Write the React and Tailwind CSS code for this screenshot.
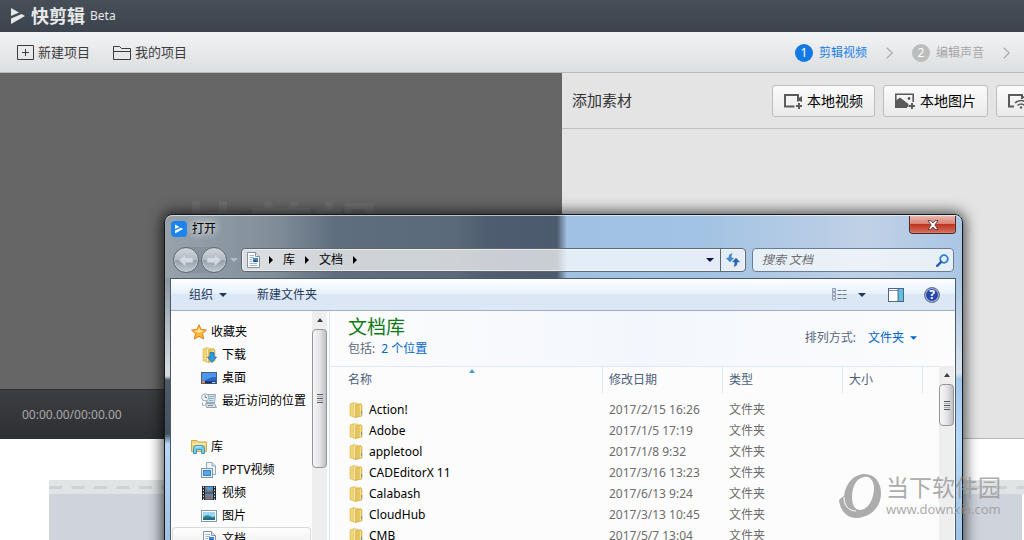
import React from "react";

const files = [
  ["Action!", "2017/2/15 16:26"],
  ["Adobe", "2017/1/5 17:19"],
  ["appletool", "2017/1/8 9:32"],
  ["CADEditorX 11", "2017/3/16 13:23"],
  ["Calabash", "2017/6/13 9:24"],
  ["CloudHub", "2017/3/13 10:45"],
  ["CMB", "2017/5/7 13:04"],
];

function PlayMark({ className }) {
  return (
    <svg viewBox="0 0 14 16" className={className} fill="currentColor" aria-hidden="true">
      <path d="M0 0L8 4.600L0 8Z" />
      <path d="M0 10.600L10.600 6L14 8L0 16Z" />
    </svg>
  );
}

function Caret({ className }) {
  return (
    <svg viewBox="0 0 8 4" className={className} fill="currentColor" aria-hidden="true">
      <path d="M0 0H8L4 4Z" />
    </svg>
  );
}

function Crumb() {
  return (
    <svg viewBox="0 0 4 8" className="h-2 w-1 shrink-0" fill="#000" aria-hidden="true">
      <path d="M0 0L4 4L0 8Z" />
    </svg>
  );
}

function DocIcon() {
  return (
    <svg viewBox="0 0 16 16" className="size-4 shrink-0" aria-hidden="true">
      <path d="M2.5 .5H10.5L14.5 4.5V15.5H2.5Z" fill="#fbfcfd" stroke="#8593a0" />
      <path d="M10.5 .5V4.5H14.5" fill="#dfe6ec" stroke="#8593a0" />
      <path d="M4.5 3.5H9M4.5 5.5H9M4.5 7.5H7M4.5 9.5H7M4.5 11.5H12M4.5 13.5H12" stroke="#9db2cb" />
      <rect x="8" y="6" width="5" height="4" fill="#3b86d6" />
      <path d="M8 10L10 8L13 10Z" fill="#1d4a6e" />
    </svg>
  );
}

function FolderIcon({ down }) {
  return (
    <svg viewBox="0 0 16 16" className="size-4 shrink-0" aria-hidden="true">
      <path d="M2 2L6 .6L8 1.400V15.4L2 13.8Z" fill="#f0d673" stroke="#cda745" strokeWidth=".5" />
      <path d="M5.600 1.6L9.4 .8V14L5.600 15.4Z" fill="#fbf0b4" stroke="#d4b24e" strokeWidth=".5" />
      <path d="M7.6 2.600L12.6 1.600L14 3V14L7.6 15.4Z" fill="#e6c55c" stroke="#c49b33" strokeWidth=".5" />
      <path d="M12.4 3V13.8" stroke="#f8e596" />
      {down ? (
        <path d="M9 5.5H13V10H15.6L11 15.6L6.4 10H9Z" fill="#2f9be8" stroke="#1566ad" strokeWidth=".7" />
      ) : (
        <path d="M13.6 9V12" stroke="#5a9bb5" />
      )}
    </svg>
  );
}

function StarIcon() {
  return (
    <svg viewBox="0 0 16 16" className="size-4 shrink-0" aria-hidden="true">
      <path d="M8 .8L10.1 5.5L15.4 6.1L11.5 9.6L12.7 15L8 12.3L3.3 15L4.5 9.6L.6 6.1L5.9 5.5Z" fill="#fdb93a" stroke="#e07a1c" strokeLinejoin="round" />
      <path d="M8 3L9.3 6.3L13 6.9L8 8.8L3 6.9L6.7 6.3Z" fill="#ffe58e" />
    </svg>
  );
}

function DesktopIcon() {
  return (
    <svg viewBox="0 0 16 16" className="size-4 shrink-0" aria-hidden="true">
      <rect x=".5" y="2.5" width="15" height="11" fill="#2765c8" stroke="#4a5f85" />
      <path d="M1 3H15V7C10 7 6 9 1 12Z" fill="#4f95ea" />
      <rect x="1" y="11.4" width="14" height="2" fill="#1c2d52" />
      <rect x="1" y="11" width="3" height="2.4" fill="#e8833a" />
      <rect x="11" y="12" width="3.4" height="1" fill="#c6d6ee" />
    </svg>
  );
}

function RecentIcon() {
  return (
    <svg viewBox="0 0 16 16" className="size-4 shrink-0" aria-hidden="true">
      <path d="M6.500 1.500H14.500L13.500 9.500H5.500Z" fill="#d3e4ef" stroke="#96a4af" />
      <path d="M8.500 3.500H13M8 5.5H12.500M8 7.500H12" stroke="#8ab0c8" />
      <path d="M4.500 10.500H13.500L15.500 14.500H5.500Z" fill="#dbe0e4" stroke="#98a2aa" />
      <path d="M7 12.5H12" stroke="#7d8f9e" />
      <circle cx="4.2" cy="4.4" r="3.6" fill="#f3f6f8" stroke="#a0a9b0" />
      <path d="M4.2 2.4V4.6H6" stroke="#6d7a85" fill="none" />
      <path d="M1.5 9.5V12.5H3.5" stroke="#9ba5ad" fill="none" />
    </svg>
  );
}

function LibraryIcon() {
  return (
    <svg viewBox="0 0 16 16" className="size-4 shrink-0" aria-hidden="true">
      <path d="M.5 1.500H6L7.5 3H15.5V12.5H.5Z" fill="#f4d777" stroke="#d0aa4c" />
      <path d="M1 5H15" stroke="#fff3bd" />
      <path d="M2.500 14.500V9.500Q2.500 6.500 5.500 6.500H10.500Q13.500 6.500 13.500 9.500V14.500H10.500V11Q10.500 10.500 10 10.500H6Q5.500 10.500 5.500 11V14.500Z" fill="#74c8ec" stroke="#3a94c4" />
      <path d="M4 9Q4.500 7.800 6 7.800H10" stroke="#d2f0fb" fill="none" />
    </svg>
  );
}

function PptvIcon() {
  return (
    <svg viewBox="0 0 16 16" className="size-4 shrink-0" aria-hidden="true">
      <path d="M5.500 .5H11L14.500 4V12.500H5.500Z" fill="#eef4f9" stroke="#93a7ba" />
      <path d="M11 .5V4H14.500" fill="none" stroke="#93a7ba" />
      <rect x=".5" y="6.500" width="11" height="9" fill="#e8f1f8" stroke="#7d96ad" />
      <rect x="2.500" y="8.500" width="7" height="5" fill="#58a6e4" stroke="#3b83c0" />
    </svg>
  );
}

function VideoIcon() {
  return (
    <svg viewBox="0 0 16 16" className="size-4 shrink-0" aria-hidden="true">
      <rect x="1" y="1" width="14" height="14" fill="#20262c" />
      <path d="M2.500 1.500V15M13.500 1.500V15" stroke="#d5dde3" strokeDasharray="1.500 1.500" />
      <rect x="4" y="1.500" width="8" height="6" fill="#4ba2d8" />
      <rect x="4" y="8.500" width="8" height="6" fill="#4ba2d8" />
      <path d="M4 2L8 6L12 3V7.500H4ZM4 9L7 10L10 8.500L12 14.500H4Z" fill="#a3503c" opacity=".6" />
    </svg>
  );
}

function PictureIcon() {
  return (
    <svg viewBox="0 0 16 16" className="size-4 shrink-0" aria-hidden="true">
      <rect x=".5" y="2.500" width="15" height="11" fill="#fbfcfd" stroke="#8797a5" />
      <rect x="2" y="4" width="12" height="8" fill="#9bd6f5" />
      <path d="M2 9Q6 6 9 8T14 8V12H2Z" fill="#2f8f7c" />
      <path d="M2 10.500Q7 9 14 10.500V12H2Z" fill="#2467a0" />
    </svg>
  );
}

function SideItem({ icon, label, root, selected }) {
  return (
    <li>
      <button
        type="button"
        className={
          "flex h-[23px] w-full items-center whitespace-nowrap text-left " +
          (root ? "gap-1 pl-[19px] " : "gap-[5px] pl-[29px] ") +
          (selected ? "rounded-sm bg-gradient-to-b from-white to-[#ececec] ring-1 ring-inset ring-[#d9d9d9]" : "")
        }
      >
        {icon}
        {label}
      </button>
    </li>
  );
}

function Thumb({ className }) {
  return (
    <div className={"flex w-[15px] items-center justify-center rounded-sm border border-[#94969b] bg-gradient-to-r from-[#f6f6f6] via-[#e6e6e8] to-[#bfc0c4] " + className}>
      <div className="flex w-1.5 flex-col gap-px">
        <div className="h-px bg-[#55585c]" />
        <div className="h-px bg-[#a9abb0]" />
        <div className="h-px bg-[#55585c]" />
        <div className="h-px bg-[#a9abb0]" />
        <div className="h-px bg-[#55585c]" />
      </div>
    </div>
  );
}

function UpArrow() {
  return (
    <svg viewBox="0 0 6 4" className="mx-auto h-1 w-1.5" fill="#3a3d42" aria-hidden="true">
      <path d="M0 4L3 0L6 4Z" />
    </svg>
  );
}

function VideoAddIcon() {
  return (
    <svg viewBox="0 0 18 16" className="h-4 w-[18px]" fill="none" stroke="#5a5a5a" aria-hidden="true">
      <path d="M10.500 13.500H1V2H14V8.500" strokeWidth="2" />
      <path d="M14 5.500L18 3V9L14 7.500Z" fill="#5a5a5a" stroke="none" />
      <path d="M15 10V16M12 13H18" strokeWidth="2" />
    </svg>
  );
}

function ImageAddIcon() {
  return (
    <svg viewBox="0 0 20 16" className="h-4 w-5" fill="none" stroke="#5a5a5a" aria-hidden="true">
      <path d="M12 14.200H.8V1.300H18.200V9" strokeWidth="1.600" />
      <path d="M1 14V7.500L5 4.500L13.500 11V14Z" fill="#5a5a5a" stroke="none" />
      <circle cx="14" cy="5.500" r="1.400" fill="#5a5a5a" stroke="none" />
      <path d="M17 10V16M14 13H20" strokeWidth="2" />
    </svg>
  );
}

function WebVideoIcon() {
  return (
    <svg viewBox="0 0 20 16" className="h-4 w-5 shrink-0" fill="none" stroke="#5a5a5a" aria-hidden="true">
      <path d="M6 13.500H1V2H14V6" strokeWidth="2" />
      <path d="M14 4L18 2V7Z" fill="#5a5a5a" stroke="none" />
      <path d="M7 10Q13 5 19 10M9.500 12.500Q13 9.500 16.500 12.500" strokeWidth="1.500" />
      <circle cx="13" cy="14.500" r="1.200" fill="#5a5a5a" stroke="none" />
    </svg>
  );
}

function Step({ n, label, active }) {
  return (
    <a href="#" className={"flex items-center gap-1.5 " + (active ? "text-[#1a7fe6]" : "text-[#a6a6a6]")}>
      <span className={"flex size-[18px] items-center justify-center rounded-full text-xs text-white " + (active ? "bg-[#1579e4]" : "bg-[#bdbdbd]")}>{n}</span>
      {label}
    </a>
  );
}

function StepArrow() {
  return (
    <svg viewBox="0 0 7 12" className="h-3 w-[7px] shrink-0" fill="none" stroke="#a9a9a9" strokeWidth="1.200" aria-hidden="true">
      <path d="M.8 .8L6.200 6L.8 11.200" />
    </svg>
  );
}

const assetButton =
  "flex h-8 shrink-0 items-center whitespace-nowrap rounded-[3px] border border-[#bdbdbd] bg-gradient-to-b from-[#fbfbfb] to-[#eaeaea] text-sm text-black";

function Editor() {
  return (
    <div className="flex h-full flex-col bg-white">
      <header className="flex h-8 shrink-0 items-center bg-gradient-to-b from-[#464e58] to-[#3c444e] pl-[11px] text-[#e8e8e8]">
        <PlayMark className="h-4 w-3.5" />
        <h1 className="ml-1.5 text-lg font-bold leading-none">快剪辑</h1>
        <span className="ml-[5px] text-xs">Beta</span>
      </header>

      <nav className="flex h-[41px] shrink-0 items-center border-b border-[#b9babc] bg-gradient-to-b from-[#f3f4f6] to-[#dddee0] pt-px pl-[17px] text-[13px] text-[#3c3c3c]">
        <button type="button" className="flex items-center gap-1">
          <svg viewBox="0 0 17 15" className="h-[15px] w-[17px]" fill="none" stroke="#3c3c3c" aria-hidden="true">
            <path d="M.5 .5H16.500V14.500H.5ZM8.500 4V11M5 7.500H12" />
          </svg>
          新建项目
        </button>
        <button type="button" className="ml-[23px] flex items-center gap-1">
          <svg viewBox="0 0 18 14" className="h-3.5 w-[18px]" fill="none" stroke="#3c3c3c" aria-hidden="true">
            <path d="M.5 13.500V.5H6.500L8.500 2.500H17.500V13.500ZM.5 5.500H17.500" />
          </svg>
          我的项目
        </button>
        <div className="ml-auto flex shrink-0 items-center pr-3.5 text-xs">
          <Step n="1" label="剪辑视频" active />
          <div className="mx-[19px]"><StepArrow /></div>
          <Step n="2" label="编辑声音" />
          <div className="ml-[19px]"><StepArrow /></div>
        </div>
      </nav>

      <div className="flex h-[366px] shrink-0">
        <section className="flex w-[562px] shrink-0 flex-col bg-[#666]">
          <div className="flex flex-1 items-center justify-center pt-0.5">
            <span className="text-[66px] font-bold leading-none text-[#6f6f6f]">快剪辑</span>
          </div>
          <div className="flex h-[50px] items-center border-t border-[#2c2d2f] bg-gradient-to-b from-[#3d3e41] to-[#2e2f33] pl-[22px] text-xs text-[#a8a8a8]">
            00:00.00/00:00.00
          </div>
        </section>
        <section className="min-w-0 flex-1 overflow-hidden border-b border-[#b5b5b5] bg-[#e4e4e4]">
          <div className="flex h-14 items-center border-b border-[#c0c0c0] pl-2.5">
            <h2 className="shrink-0 text-[15px] whitespace-nowrap text-[#333]">添加素材</h2>
            <div className="ml-[140px] flex shrink-0 gap-2">
              <button type="button" className={assetButton + " gap-[5px] px-[11px]"}>
                <VideoAddIcon />本地视频
              </button>
              <button type="button" className={assetButton + " gap-[5px] px-[11px]"}>
                <ImageAddIcon />本地图片
              </button>
              <button type="button" className={assetButton + " px-[11px]"} aria-label="网络视频">
                <WebVideoIcon />
              </button>
            </div>
          </div>
        </section>
      </div>

      <div className="mt-[41px] ml-[49px] flex flex-1 flex-col">
        <div className="flex h-3.5 items-center bg-[#e0e4e5]">
          <svg className="h-[3px] w-full" aria-hidden="true">
            <path d="M0 1.500H1000" stroke="#ccd2d6" strokeWidth="3" strokeDasharray="13 9.500" />
          </svg>
        </div>
        <div className="mr-0.5 flex-1 bg-[#ced3dc]" />
      </div>
    </div>
  );
}

function TitleBar() {
  return (
    <div className="flex h-7 items-start pl-1.5">
      <div className="mt-[5px] flex items-center gap-[5px]">
        <div className="flex size-4 items-center justify-center rounded-sm bg-[#1b83ee] text-white">
          <PlayMark className="h-2.5 w-2" />
        </div>
        <h2 className="text-xs leading-4 text-black [text-shadow:0_0_8px_#fff,0_0_8px_#fff]">打开</h2>
      </div>
      <button
        type="button"
        aria-label="关闭"
        className="mr-1.5 ml-auto flex h-[18px] w-[47px] items-center justify-center rounded-b border border-t-0 border-[#4e2527] bg-[linear-gradient(to_bottom,#eab4aa_0,#d98474_45%,#bf3420_50%,#d4705c_100%)] shadow-[inset_0_0_1px_#fff]"
      >
        <svg viewBox="0 0 12 10" className="h-2.5 w-3" aria-hidden="true">
          <path d="M1 .7H4L6 3L8 .7H11L7.800 5L11 9.300H8L6 7L4 9.300H1L4.200 5Z" fill="#fff" stroke="#4f3a3e" strokeWidth=".9" />
        </svg>
      </button>
    </div>
  );
}

function NavCircle({ flip }) {
  return (
    <button
      type="button"
      aria-label={flip ? "前进" : "后退"}
      className="flex size-[26px] items-center justify-center rounded-full border border-[#5f6a75] bg-[linear-gradient(to_bottom,#d0d6db_0,#b3bcc4_48%,#939fa9_52%,#c3ccd3_100%)] shadow-[inset_0_0_0_1px_#c9d0d6]"
    >
      <svg viewBox="0 0 16 14" className={"h-3.5 w-4 " + (flip ? "rotate-180" : "")} aria-hidden="true">
        <path d="M1 7L7.500 1V4.500H15V9.500H7.500V13Z" fill="#d3d9de" stroke="#b9c2c9" />
      </svg>
    </button>
  );
}

function AddressRow() {
  return (
    <div className="flex h-[34px] items-center pr-2 pb-0.5 pl-2">
      <div className="flex items-center gap-0.5 rounded-full bg-[#87929d]">
        <NavCircle />
        <NavCircle flip />
      </div>
      <Caret className="ml-[3px] h-1 w-2 text-[#b5bec6]" />
      <div className="ml-[3px] flex h-6 flex-1 items-center rounded-sm border border-[#5d6873] bg-white/70 pl-[3px] text-xs text-black ring-1 ring-inset ring-white/50">
        <DocIcon />
        <div className="ml-2 flex items-center gap-[10px]">
          <Crumb />
          <span>库</span>
          <Crumb />
          <span>文档</span>
          <Crumb />
        </div>
        <button type="button" aria-label="展开" className="mr-1 ml-auto px-0.5">
          <Caret className="h-1 w-2 text-[#101050]" />
        </button>
        <button type="button" aria-label="刷新" className="flex h-full w-[25px] items-center justify-center border-l border-[#5d6873]">
          <svg viewBox="0 0 14 14" className="size-3.5" aria-hidden="true">
            <path d="M6 .5Q2.500 1 2.800 5H.3L4 9L7.600 5H5.200Q5 3 6 .5Z" fill="#3a8fd8" stroke="#2a6cab" strokeWidth=".4" />
            <path d="M8 13.500Q11.500 13 11.200 9H13.700L10 5L6.400 9H8.800Q9 11 8 13.500Z" fill="#2a62b4" stroke="#2a6cab" strokeWidth=".4" />
          </svg>
        </button>
      </div>
      <label className="ml-[6px] flex h-6 w-[202px] items-center rounded-sm border border-[#6b7c90] bg-white/70 pr-1 pl-[9px]">
        <input
          type="search"
          aria-label="搜索 文档"
          placeholder="搜索 文档"
          className="min-w-0 flex-1 bg-transparent text-xs italic outline-none placeholder:text-[#6d6d6d]"
        />
        <svg viewBox="0 0 13 13" className="size-[13px]" fill="none" aria-hidden="true">
          <circle cx="8" cy="5" r="3.800" stroke="#2a7fd0" strokeWidth="1.800" />
          <path d="M5.200 7.800L1.200 11.800" stroke="#2b5fae" strokeWidth="2.400" strokeLinecap="round" />
        </svg>
      </label>
    </div>
  );
}

function CommandBar() {
  return (
    <div className="flex h-8 shrink-0 items-center border-b border-[#a0afc3] bg-[linear-gradient(to_bottom,#fcfeff_0,#e8f2fb_46%,#dce7f5_50%,#dce7f5_100%)] pr-[15px] pl-[18px] text-xs text-[#1e395b]">
      <button type="button" className="flex items-center gap-1.5">
        组织
        <Caret className="h-1 w-2" />
      </button>
      <button type="button" className="ml-[30px]">新建文件夹</button>
      <button type="button" aria-label="更改视图" className="ml-auto flex items-center gap-[11px]">
        <svg viewBox="0 0 15 13" className="h-[13px] w-[15px]" fill="none" aria-hidden="true">
          <path d="M.5 .5H3.500V3.500H.5ZM.5 4.500H3.500V7.500H.5ZM.5 8.500H3.500V12H.5Z" stroke="#8c9bb0" fill="#fff" />
          <path d="M1.500 2H2.500M1.500 10.500H2.500" stroke="#3b7fc4" />
          <path d="M1.500 6H2.500" stroke="#d0543a" />
          <path d="M5.500 2.500H9.500M10.500 2.500H14.500M5.500 6.500H9.500M10.500 6.500H14.500M5.500 10.500H9.500M10.500 10.500H14.500" stroke="#66788f" />
        </svg>
        <Caret className="h-1 w-2" />
      </button>
      <button type="button" aria-label="预览窗格" className="ml-[22px]">
        <svg viewBox="0 0 16 14" className="h-3.5 w-4" aria-hidden="true">
          <rect x=".5" y=".5" width="15" height="13" fill="#fff" stroke="#4c6684" />
          <path d="M1 2.500H10" stroke="#7d93ad" />
          <rect x="10" y="1" width="5" height="12" fill="#62bede" />
          <path d="M10 1V13" stroke="#4c6684" />
        </svg>
      </button>
      <button type="button" aria-label="帮助" className="ml-5 flex size-4 items-center justify-center rounded-full border border-[#707c90] bg-[#2848b0] text-xs font-bold leading-none text-white shadow-[inset_0_0_0_1px_#b5c0da]">
        ?
      </button>
    </div>
  );
}

function Sidebar() {
  return (
    <div className="flex w-[159px] shrink-0 overflow-hidden border-r border-[#dbe6f4]">
      <div className="min-w-0 flex-1 overflow-hidden pt-[9px] pr-px pl-px">
        <ul>
          <SideItem root icon={<StarIcon />} label="收藏夹" />
          <SideItem icon={<FolderIcon down />} label="下载" />
          <SideItem icon={<DesktopIcon />} label="桌面" />
          <SideItem icon={<RecentIcon />} label="最近访问的位置" />
        </ul>
        <ul className="mt-[23px]">
          <SideItem root icon={<LibraryIcon />} label="库" />
          <SideItem icon={<PptvIcon />} label="PPTV视频" />
          <SideItem icon={<VideoIcon />} label="视频" />
          <SideItem icon={<PictureIcon />} label="图片" />
          <SideItem icon={<DocIcon />} label="文档" selected />
        </ul>
      </div>
      <div className="mr-0.5 flex w-[15px] flex-col bg-[#eeeeef]">
        <div className="flex h-[18px] shrink-0 items-center"><UpArrow /></div>
        <Thumb className="h-[139px]" />
      </div>
    </div>
  );
}

function FileList() {
  const head = "h-[26px] border-r border-[#d9e5f3] pl-1.5 text-left align-middle font-normal";
  return (
    <div className="flex min-w-0 flex-1 flex-col bg-[#fcfcfc]">
      <div className="flex h-[55px] shrink-0 items-start bg-gradient-to-r from-[#fcfcfc] via-[#f3f7fd] to-[#fcfcfc] pr-[38px] pl-[18px]">
        <div>
          <h3 className="mt-1 text-[19px] leading-6 text-[#0f7a14]">文档库</h3>
          <p className="text-xs leading-5 text-[#5a677b]">
            包括: <a href="#" className="ml-[3px] text-[#0066cc]">2 个位置</a>
          </p>
        </div>
        <div className="mt-[17px] ml-auto flex items-center text-xs leading-5 text-[#5a677b]">
          排列方式:
          <button type="button" className="ml-3 flex items-center gap-1.5 text-[#0066cc]">
            文件夹
            <Caret className="h-1 w-[7px]" />
          </button>
        </div>
      </div>
      <div className="flex min-h-0 flex-1">
        <div className="relative min-w-0 flex-1 overflow-hidden border-t border-[#dce8f5] pl-3">
          <svg viewBox="0 0 6 4" className="absolute top-0.5 left-[139px] h-1 w-1.5" fill="#4a9cc9" aria-hidden="true">
            <path d="M0 4L3 0L6 4Z" />
          </svg>
          <table className="w-full table-fixed border-separate border-spacing-0 text-xs leading-5 text-[#6d6d6d]">
            <colgroup>
              <col className="w-[261px]" />
              <col className="w-[120px]" />
              <col className="w-[120px]" />
              <col className="w-20" />
              <col />
            </colgroup>
            <thead className="text-[#4c607a]">
              <tr>
                <th className={head}>名称</th>
                <th className={head}>修改日期</th>
                <th className={head}>类型</th>
                <th className={head}>大小</th>
                <th aria-hidden="true" />
              </tr>
              <tr><td colSpan={5} className="h-1.5 p-0" /></tr>
            </thead>
            <tbody>
              {files.map(([name, date]) => (
                <tr key={name}>
                  <td className="h-[21px] p-0 pl-1.5 align-middle text-black">
                    <span className="flex items-center gap-[5px] leading-5"><FolderIcon />{name}</span>
                  </td>
                  <td className="p-0 pl-1.5">{date}</td>
                  <td className="p-0 pl-1.5">文件夹</td>
                  <td />
                  <td />
                </tr>
              ))}
            </tbody>
          </table>
        </div>
        <div className="mr-px flex w-[15px] shrink-0 flex-col bg-[#eeeeef]">
          <div className="flex h-[18px] shrink-0 items-center"><UpArrow /></div>
          <Thumb className="h-[42px]" />
        </div>
      </div>
    </div>
  );
}

function OpenDialog() {
  return (
    <div
      role="dialog"
      aria-label="打开"
      className="absolute top-[214px] -bottom-4 left-[164px] flex w-[799px] flex-col overflow-hidden rounded-t-lg border border-[#16191c] bg-[linear-gradient(90deg,#98a2ab_0,#818e9a_110px,#5f6e7e_170px,#5b6a7a_290px,#4e5e70_320px,#4b5b6d_392px,#a1c1e2_402px,#a3c3e4_540px,#c0d1e6_700px,#a9c6e4_799px)] shadow-[0_0_14px_2px_rgba(0,0,0,0.7)]"
    >
      <div className="flex min-h-0 flex-1 flex-col rounded-t-[7px] border-t border-white/60">
        <TitleBar />
        <AddressRow />
        <div className="flex min-h-0 flex-1">
          <div className="w-[5px] shrink-0 bg-[linear-gradient(to_bottom,#8d98a3_0,#d5dade_90px,#d5dade_98px,#4d5966_102px,#46525f_156px,#b7d7f8_166px,#9dbde0_100%)]" />
          <div className="flex min-w-0 flex-1 flex-col border-x border-t border-[#4b5a6b] bg-[#fcfcfc]">
            <CommandBar />
            <div className="flex min-h-0 flex-1 text-xs text-black">
              <Sidebar />
              <FileList />
            </div>
          </div>
          <div className="w-[6px] shrink-0 bg-[linear-gradient(to_bottom,#a9c6e4_0,#dbe4ee_95px,#a3c6ec_101px,#b7dafb_160px,#9dc0e6_100%)]" />
        </div>
      </div>
    </div>
  );
}

function Watermark() {
  return (
    <div className="pointer-events-none absolute top-[472px] left-[838px] flex items-center gap-1 text-[#999] opacity-80">
      <svg viewBox="0 0 44 46" className="h-[46px] w-11" fill="#999" aria-hidden="true">
        <path fillRule="evenodd" d="M25 2C36 1 43 10 43 21C43 35 33 45 19 46C8 46 2 38 1 28C3 26 4 25 6 24C8 10 16 3 25 2ZM26 5C19 6 14 14 14 25C14 33 17 38 22 38C30 38 36 27 36 16C36 9 32 4 26 5Z" />
        <path d="M6 25C6 33 10 39 18 39" fill="none" stroke="#fff" strokeWidth="1" />
      </svg>
      <div>
        <p className="text-[23px] leading-7 whitespace-nowrap">当下软件园</p>
        <p className="text-[13px] leading-4">www.downxia.com</p>
      </div>
    </div>
  );
}

export default function App() {
  return (
    <div className="relative h-screen overflow-hidden font-['Noto_Sans','Noto_Sans_CJK_SC',sans-serif]">
      <Editor />
      <OpenDialog />
      <Watermark />
    </div>
  );
}
